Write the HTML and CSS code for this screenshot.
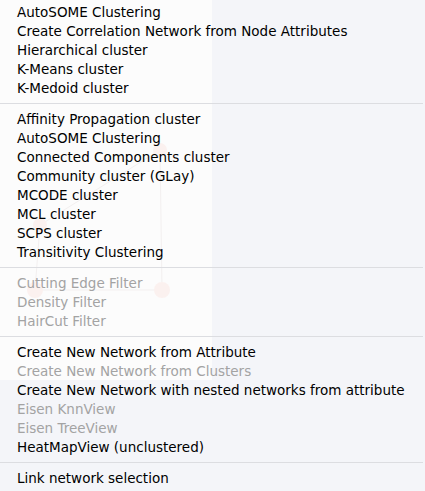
FILE: index.html
```html
<!DOCTYPE html>
<html lang="en">
<head>
  <meta charset="UTF-8">
  <title>Cluster menu</title>
  <link rel="stylesheet" href="styles.css">
</head>
<body>

<!-- faint network showing through the translucent menu -->
<div class="backdrop">
  <svg width="212" height="380" viewBox="0 0 212 380">
    <g stroke="#f3f0f0" stroke-width="1" fill="none">
      <line x1="40" y1="225" x2="160" y2="150"/>
      <line x1="40" y1="225" x2="35" y2="290"/>
      <line x1="35" y1="290" x2="162" y2="290"/>
      <line x1="162" y1="290" x2="160" y2="150"/>
    </g>
    <g fill="#fbf1ef">
      <circle cx="160" cy="150" r="7"/>
      <circle cx="40" cy="225" r="7"/>
      <circle cx="35" cy="290" r="8"/>
      <circle cx="162" cy="290" r="8"/>
    </g>
  </svg>
</div>

<ul class="menu">
  <li class="item">AutoSOME Clustering</li>
  <li class="item">Create Correlation Network from Node Attributes</li>
  <li class="item">Hierarchical cluster</li>
  <li class="item">K-Means cluster</li>
  <li class="item">K-Medoid cluster</li>
  <li class="separator"></li>
  <li class="item">Affinity Propagation cluster</li>
  <li class="item">AutoSOME Clustering</li>
  <li class="item">Connected Components cluster</li>
  <li class="item">Community cluster (GLay)</li>
  <li class="item">MCODE cluster</li>
  <li class="item">MCL cluster</li>
  <li class="item">SCPS cluster</li>
  <li class="item">Transitivity Clustering</li>
  <li class="separator"></li>
  <li class="item disabled">Cutting Edge Filter</li>
  <li class="item disabled">Density Filter</li>
  <li class="item disabled">HairCut Filter</li>
  <li class="separator"></li>
  <li class="item">Create New Network from Attribute</li>
  <li class="item disabled">Create New Network from Clusters</li>
  <li class="item">Create New Network with nested networks from attribute</li>
  <li class="item disabled">Eisen KnnView</li>
  <li class="item disabled">Eisen TreeView</li>
  <li class="item">HeatMapView (unclustered)</li>
  <li class="separator"></li>
  <li class="item">Link network selection</li>
</ul>

</body>
</html>
```

FILE: styles.css
```css
/* Page */
body {
  margin: 0;
  background-color: #f4f5f9;
  font-family: 'DejaVu Sans', 'Liberation Sans', sans-serif;
  position: relative;
  width: 425px;
  height: 491px;
  overflow: hidden;
}

/* Whiter window behind the menu, on the left */
.backdrop {
  position: absolute;
  top: 0;
  left: 0;
  width: 212px;
  height: 380px;
  background-color: #fcfcfc;
}

.backdrop svg {
  display: block;
}

/* Menu list */
.menu {
  position: relative;
  list-style: none;
  margin: 0;
  padding: 3px 0 3px;
}

.item {
  height: 19px;
  line-height: 19px;
  padding-left: 17px;
  font-size: 13.5px;
  color: #000;
  white-space: nowrap;
}

.disabled {
  color: #a3a3a3;
}

/* Separator: 12px tall with a 1px line near the middle */
.separator {
  height: 12px;
  display: flex;
  align-items: flex-start;
}

.separator::after {
  content: "";
  flex: 1;
  height: 1px;
  margin-top: 5px;
  margin-right: 2px;
  background-color: #dcdde1;
}
```
